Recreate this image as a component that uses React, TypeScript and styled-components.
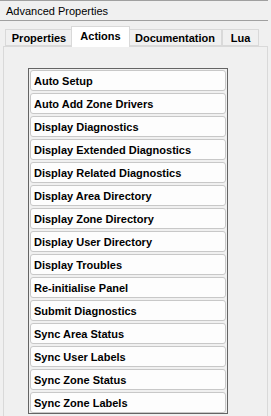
import React from "react";
import styled, { createGlobalStyle } from "styled-components";

const Global = createGlobalStyle`
  html, body { margin: 0; padding: 0; background: #f0f0f0; }
  body { font-family: "Liberation Sans", Arial, sans-serif; }
`;

const Window = styled.div`
  width: 271px;
  height: 416px;
  overflow: hidden;
  background: #f0f0f0;
  display: flex;
  flex-direction: column;
`;

const TitleBar = styled.div`
  height: 21px;
  border-top: 1px solid #a0a0a0;
  border-bottom: 1px solid #a0a0a0;
  width: 268px;
  box-sizing: content-box;
  display: flex;
  align-items: center;
  padding-left: 6px;
  font-size: 11px;
  color: #000;
  box-sizing: border-box;
`;

const TabStrip = styled.div`
  display: flex;
  align-items: flex-end;
  height: 24px;
  padding-left: 5px;
  margin-top: 1px;
`;

const Tab = styled.div<{ $w: number; $active?: boolean }>`
  width: ${(p) => p.$w}px;
  box-sizing: border-box;
  height: ${(p) => (p.$active ? 21 : 17)}px;
  margin: ${(p) => (p.$active ? "0 -2px -1px -2px" : "0")};
  position: relative;
  z-index: ${(p) => (p.$active ? 2 : 1)};
  background: ${(p) => (p.$active ? "#ffffff" : "#f0f0f0")};
  border: 1px solid #d9d9d9;
  border-bottom: ${(p) => (p.$active ? "none" : "1px solid #d9d9d9")};
  font-size: 11px;
  font-weight: bold;
  color: #000;
  display: flex;
  align-items: ${(p) => (p.$active ? "flex-start" : "center")};
  padding-top: ${(p) => (p.$active ? "3px" : "0")};
  justify-content: center;
  margin-left: ${(p) => (p.$active ? "-2px" : "0")};
`;

const Panel = styled.div`
  flex: 1;
  margin-left: 3px;
  width: 265px;
  box-sizing: border-box;
  border-left: 1px solid #d9d9d9;
  border-right: 1px solid #d9d9d9;
  border-top: 1px solid #d9d9d9;
  background: #f0f0f0;
  padding: 21px 0 0 24px;
`;

const ActionList = styled.div`
  width: 200px;
  box-sizing: border-box;
  border: 1px solid #646464;
  padding: 1px 1px 0 1px;
  display: flex;
  flex-direction: column;
  gap: 2px;
  background: #f0f0f0;
`;

const ActionButton = styled.div`
  height: 21px;
  width: 196px;
  box-sizing: border-box;
  border: 1px solid #c8c8c8;
  border-radius: 3px;
  background: #fdfdfd;
  display: flex;
  align-items: center;
  padding-left: 3px;
  font-size: 11px;
  font-weight: bold;
  color: #000;
  white-space: nowrap;
`;

const actions = [
  "Auto Setup",
  "Auto Add Zone Drivers",
  "Display Diagnostics",
  "Display Extended Diagnostics",
  "Display Related Diagnostics",
  "Display Area Directory",
  "Display Zone Directory",
  "Display User Directory",
  "Display Troubles",
  "Re-initialise Panel",
  "Submit Diagnostics",
  "Sync Area Status",
  "Sync User Labels",
  "Sync Zone Status",
  "Sync Zone Labels",
];

const tabs = [
  { label: "Properties", w: 68 },
  { label: "Actions", w: 59, active: true },
  { label: "Documentation", w: 94 },
  { label: "Lua", w: 37 },
];

export default function App() {
  return (
    <>
      <Global />
      <Window>
        <TitleBar>Advanced Properties</TitleBar>
        <TabStrip>
          {tabs.map((t) => (
            <Tab key={t.label} $w={t.w} $active={t.active}>
              {t.label}
            </Tab>
          ))}
        </TabStrip>
        <Panel>
          <ActionList>
            {actions.map((a) => (
              <ActionButton key={a}>{a}</ActionButton>
            ))}
          </ActionList>
        </Panel>
      </Window>
    </>
  );
}
